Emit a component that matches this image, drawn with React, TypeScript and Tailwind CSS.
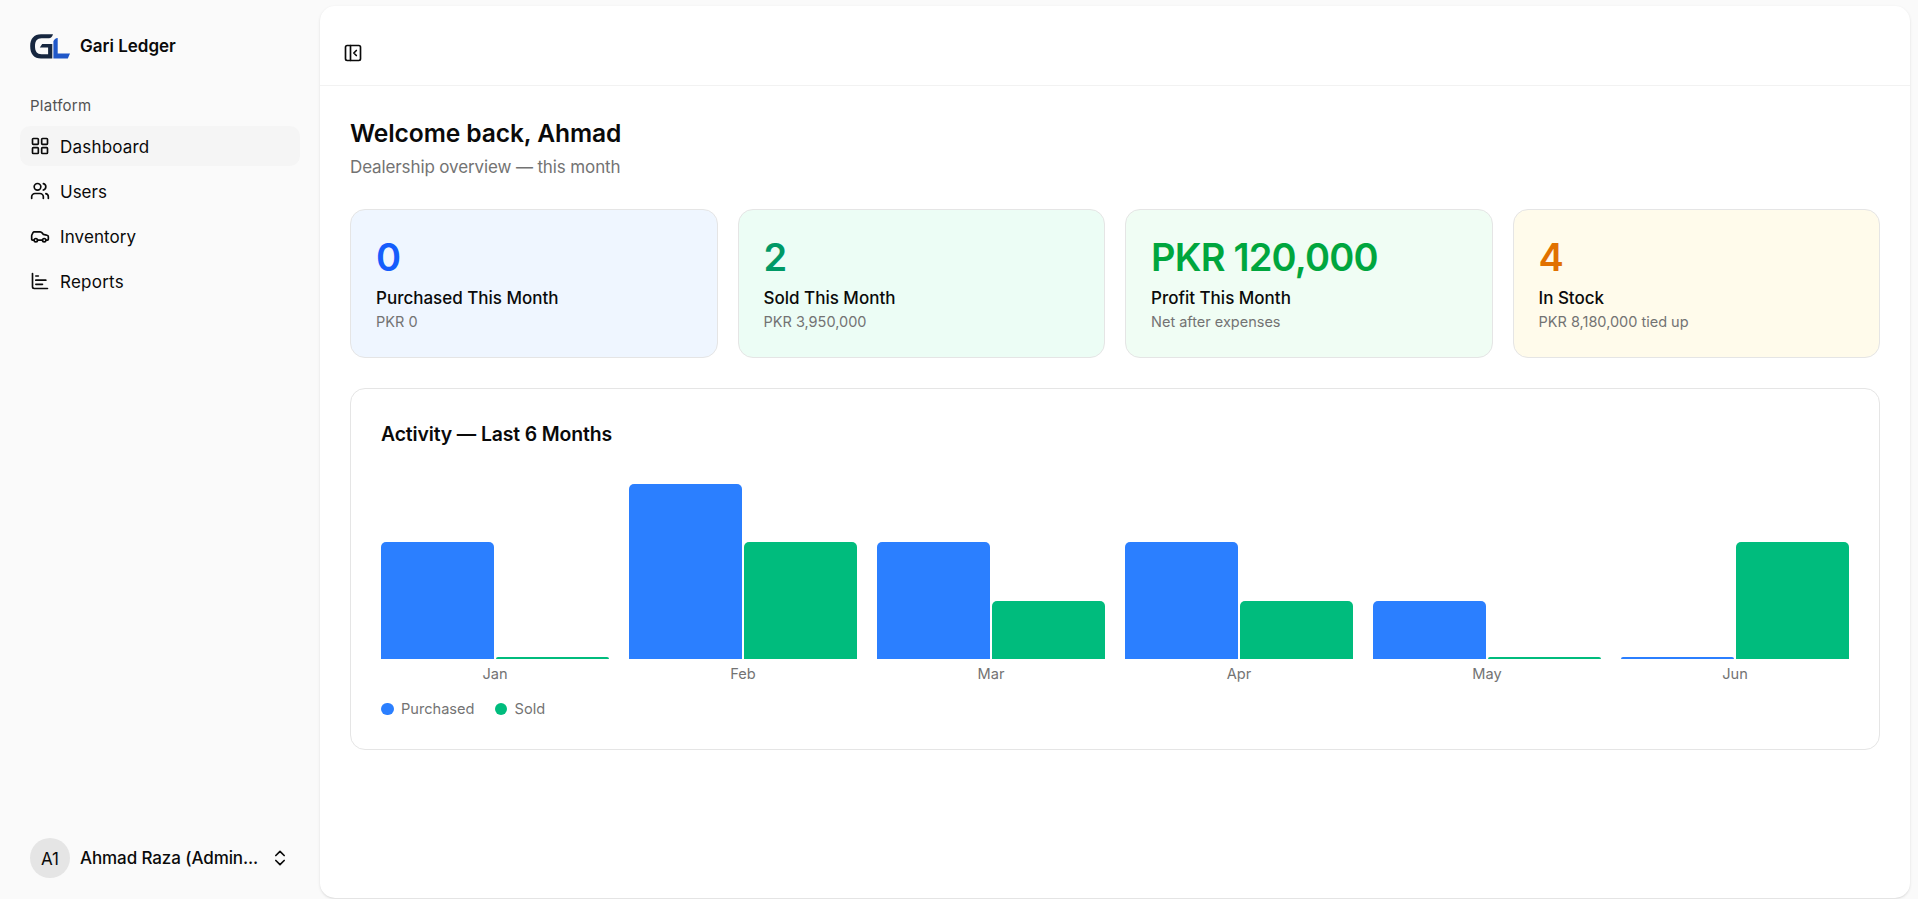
import { Car, ChartBar, ChevronsUpDown, LayoutGrid, PanelLeftClose, Users } from "lucide-react";

const NAV_ITEMS = [
  { title: "Dashboard", icon: LayoutGrid, active: true, tracking: "tracking-[0.2px]" },
  { title: "Users", icon: Users, active: false, tracking: "tracking-normal" },
  { title: "Inventory", icon: Car, active: false, tracking: "tracking-[0.1px]" },
  { title: "Reports", icon: ChartBar, active: false, tracking: "tracking-[0.25px]" },
];

const STATS = [
  { value: "0", label: "Purchased This Month", sub: "PKR 0", card: "bg-blue-50", color: "text-blue-600" },
  { value: "2", label: "Sold This Month", sub: "PKR 3,950,000", card: "bg-emerald-50", color: "text-emerald-600" },
  { value: "PKR 120,000", label: "Profit This Month", sub: "Net after expenses", card: "bg-green-50", color: "text-green-600" },
  { value: "4", label: "In Stock", sub: "PKR 8,180,000 tied up", card: "bg-amber-50", color: "text-amber-600" },
];

const ACTIVITY = [
  { month: "Jan", purchased: 2, sold: 0 },
  { month: "Feb", purchased: 3, sold: 2 },
  { month: "Mar", purchased: 2, sold: 1 },
  { month: "Apr", purchased: 2, sold: 1 },
  { month: "May", purchased: 1, sold: 0 },
  { month: "Jun", purchased: 0, sold: 2 },
];

const CHART_HEIGHT = 175;
const MAX = Math.max(...ACTIVITY.flatMap((m) => [m.purchased, m.sold]));

function barHeight(count: number) {
  return Math.max(Math.round((count / MAX) * CHART_HEIGHT), 2);
}

function Logo() {
  return (
    <svg viewBox="0 0 40 25" className="h-[25px] w-10 shrink-0">
      <path
        fill="#16263f"
        d="M23 .2H11C4 .2.2 4.5.2 12.3S4 24.6 11 24.6h11.3V9.9H12.2l-2.4 3.7h8.3v6.7h-6.6c-4.5 0-6.5-2.7-6.5-8s2-8 6.5-8H19c1.8 0 3.2-1.4 4-4.1Z"
      />
      <path fill="#1f57c8" d="M23.4 7.2c.8-1.8 2.2-2.9 4.3-3.2v15.5H40l-2.2 5.1H23.4Z" />
    </svg>
  );
}

function Sidebar() {
  return (
    <aside className="flex w-80 shrink-0 flex-col px-5 pt-4 pb-[11px]">
      <div className="flex h-[60px] items-center gap-[10px] px-[10px]">
        <Logo />
        <span className="pt-0.5 text-[17px] font-semibold">Gari Ledger</span>
      </div>
      <div className="mt-[10px] flex h-10 items-center px-[10px] text-[15px] tracking-[0.25px] text-neutral-600">
        Platform
      </div>
      <nav className="flex flex-col gap-[5px]">
        {NAV_ITEMS.map((item) => (
          <a
            key={item.title}
            className={`flex h-10 items-center gap-[10px] rounded-[10px] px-[10px] text-[17px] ${
              item.active ? "bg-neutral-100" : ""
            }`}
          >
            <item.icon className="size-5 shrink-0" />
            <span className={`pt-1 ${item.tracking}`}>{item.title}</span>
          </a>
        ))}
      </nav>
      <div className="mt-auto flex h-[60px] items-center gap-[10px] px-[10px]">
        <div className="flex size-10 shrink-0 items-center justify-center rounded-full bg-neutral-200 pt-1 text-[17px]">
          A1
        </div>
        <span className="flex-1 pt-0.5 text-[17px] font-[450] whitespace-nowrap tracking-[-0.1px]">
          Ahmad Raza (Admin...
        </span>
        <ChevronsUpDown className="size-5 shrink-0" />
      </div>
    </aside>
  );
}

function ActivityChart() {
  return (
    <div className="mt-[30px] h-[362px] rounded-[15px] border border-neutral-200 px-[30px] pt-[31px]">
      <h2 className="text-[19.4px] leading-[28px] font-semibold tracking-[-0.13px]">Activity — Last 6 Months</h2>
      <div className="mt-[36px] grid grid-cols-6 gap-5">
        {ACTIVITY.map((m) => (
          <div key={m.month}>
            <div className="flex h-[175px] items-end gap-[2px]">
              <div className="flex-1 rounded-t-[5px] bg-blue-500" style={{ height: barHeight(m.purchased) }} />
              <div className="flex-1 rounded-t-[5px] bg-emerald-500" style={{ height: barHeight(m.sold) }} />
            </div>
            <div className="mt-[5px] text-center text-[14.6px] leading-5 text-neutral-500">{m.month}</div>
          </div>
        ))}
      </div>
      <div className="mt-[15px] flex gap-5 text-[14.6px] leading-5 text-neutral-500">
        <span className="flex items-center gap-[7.5px]">
          <span className="size-[12.5px] rounded-full bg-blue-500" />
          Purchased
        </span>
        <span className="flex items-center gap-[7.5px]">
          <span className="size-[12.5px] rounded-full bg-emerald-500" />
          Sold
        </span>
      </div>
    </div>
  );
}

export default function App() {
  return (
    <div className="flex h-[899px] overflow-hidden bg-neutral-50 font-['Inter',sans-serif] text-neutral-950">
      <Sidebar />
      <main className="mt-[6px] mr-2 mb-px flex-1 rounded-[15px] bg-white shadow-sm">
        <header className="flex h-20 items-center border-b border-[#f2f2f2] px-[23px] pt-[15px]">
          <PanelLeftClose className="size-5" />
        </header>
        <div className="px-[30px] pt-[30px]">
          <h1 className="text-[24.6px] leading-[35px] font-semibold tracking-[-0.1px]">Welcome back, Ahmad</h1>
          <p className="mt-[4px] text-[17px] leading-[25px] tracking-[-0.12px] text-neutral-500">
            Dealership overview — this month
          </p>
          <div className="mt-[29px] grid grid-cols-4 gap-5">
            {STATS.map((s) => (
              <div key={s.label} className={`h-[149px] rounded-[15px] border border-neutral-200 p-[25px] ${s.card}`}>
                <div className={`text-[38px] leading-[45px] font-semibold tracking-[-0.8px] ${s.color}`}>{s.value}</div>
                <div className="mt-[6px] text-[17px] leading-[25px] font-[450]">{s.label}</div>
                <div className="mt-px text-[14.5px] leading-5 text-neutral-500">{s.sub}</div>
              </div>
            ))}
          </div>
          <ActivityChart />
        </div>
      </main>
    </div>
  );
}
